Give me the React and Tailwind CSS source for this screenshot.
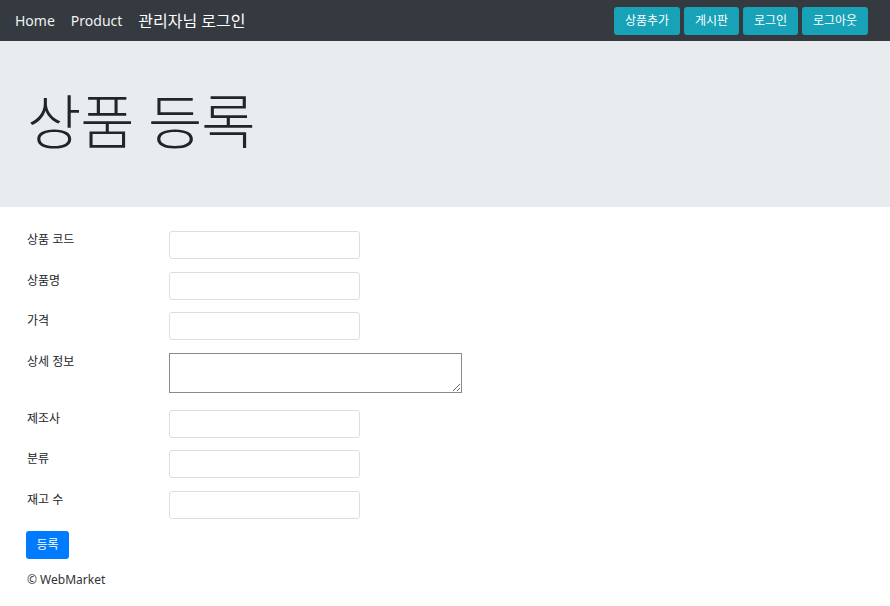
export default function App() {
  const font = { fontFamily: '"Noto Sans", "Noto Sans CJK KR", sans-serif' };
  const rows = [
    { label: "상품 코드" },
    { label: "상품명" },
    { label: "가격" },
    { label: "상세 정보", area: true },
    { label: "제조사" },
    { label: "분류" },
    { label: "재고 수" },
  ];
  return (
    <div className="w-[890px] h-[606px] bg-white text-[#212529]" style={font}>
      <nav className="h-[41px] bg-[#343a40] flex items-center justify-between pl-[15px] pr-[22px]">
        <div className="flex items-center gap-[16px] leading-none">
          <span className="text-[#f1f1f1] text-[14px]">Home</span>
          <span className="text-[#f1f1f1] text-[14px]">Product</span>
          <span className="text-white text-[16px]">관리자님 로그인</span>
        </div>
        <div className="flex items-center gap-[4px]">
          <button className="h-[28px] w-[66px] rounded-[3px] bg-[#17a2b8] text-white text-[12px]">상품추가</button>
          <button className="h-[28px] w-[55px] rounded-[3px] bg-[#17a2b8] text-white text-[12px]">게시판</button>
          <button className="h-[28px] w-[55px] rounded-[3px] bg-[#17a2b8] text-white text-[12px]">로그인</button>
          <button className="h-[28px] w-[66px] rounded-[3px] bg-[#17a2b8] text-white text-[12px]">로그아웃</button>
        </div>
      </nav>
      <div className="h-[166px] bg-[#e9ecef] flex items-center pl-[27px] pb-[6px]">
        <h1 className="text-[59px] font-light leading-none text-[#212529] tracking-[-1px]">상품 등록</h1>
      </div>
      <div className="pl-[27px] pt-[24px]">
        {rows.map((r) =>
          r.area ? (
            <div key={r.label} className="flex mb-[17px]">
              <label className="w-[142px] text-[12px] leading-[18px]">{r.label}</label>
              <textarea className="w-[293px] h-[40px] border border-[#8a8a8a] bg-white resize-y block" />
            </div>
          ) : (
            <div key={r.label} className="flex mb-[12.5px]">
              <label className="w-[142px] text-[12px] leading-[18px]">{r.label}</label>
              <input className="w-[191px] h-[28px] border border-[#dcdfe2] rounded-[3px] bg-white block" />
            </div>
          )
        )}
        <button className="h-[28px] w-[43px] -ml-[1px] rounded-[3px] bg-[#007bff] text-white text-[12px]">등록</button>
        <div className="mt-[12px] text-[12px] text-[#333]">© WebMarket</div>
      </div>
    </div>
  );
}
